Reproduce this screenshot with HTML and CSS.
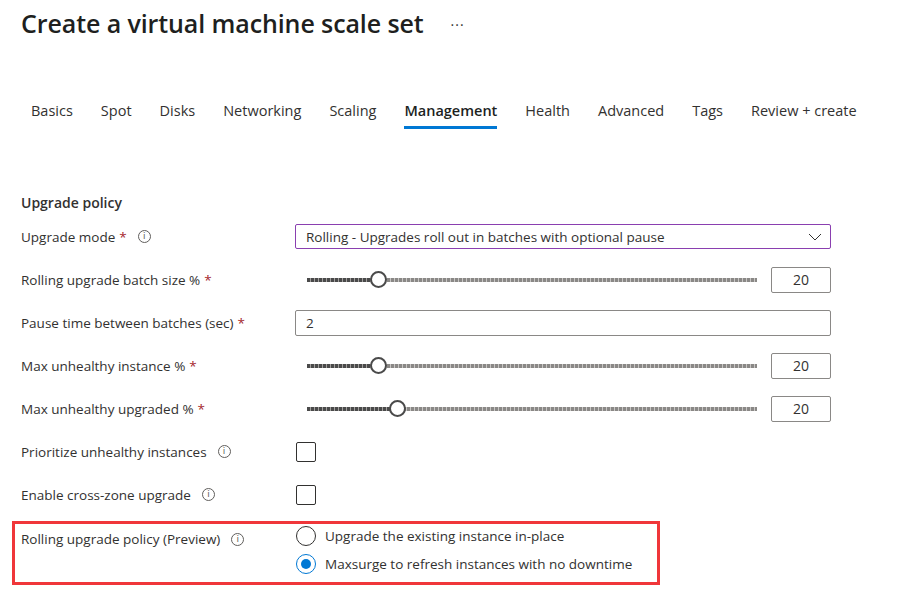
FILE: index.html
```html
<!DOCTYPE html>
<html lang="en">
<head>
<meta charset="utf-8">
<title>Create a virtual machine scale set</title>
<link rel="stylesheet" href="styles.css">
</head>
<body>
<header class="page-header">
  <h1 class="title">Create a virtual machine scale set</h1>
  <span class="more">···</span>
</header>

<nav class="tabs">
  <span class="tab">Basics</span>
  <span class="tab">Spot</span>
  <span class="tab">Disks</span>
  <span class="tab">Networking</span>
  <span class="tab">Scaling</span>
  <span class="tab active">Management</span>
  <span class="tab">Health</span>
  <span class="tab">Advanced</span>
  <span class="tab">Tags</span>
  <span class="tab">Review + create</span>
</nav>

<main class="form">
  <h2 class="section">Upgrade policy</h2>

  <div class="row">
    <div class="label">Upgrade mode <span class="req">*</span> <span class="info">i</span></div>
    <div class="control">
      <div class="dropdown">
        <span>Rolling - Upgrades roll out in batches with optional pause</span>
        <svg class="chev" width="14" height="8" viewBox="0 0 14 8"><path d="M1 1l6 6 6-6" fill="none" stroke="#323130" stroke-width="1"/></svg>
      </div>
    </div>
  </div>

  <div class="row">
    <div class="label">Rolling upgrade batch size % <span class="req">*</span></div>
    <div class="control slider-control">
      <div class="slider"><div class="fill" style="width:15.8%"></div><div class="thumb" style="left:15.8%"></div></div>
      <div class="num">20</div>
    </div>
  </div>

  <div class="row">
    <div class="label">Pause time between batches (sec) <span class="req">*</span></div>
    <div class="control">
      <div class="textbox">2</div>
    </div>
  </div>

  <div class="row">
    <div class="label">Max unhealthy instance % <span class="req">*</span></div>
    <div class="control slider-control">
      <div class="slider"><div class="fill" style="width:15.8%"></div><div class="thumb" style="left:15.8%"></div></div>
      <div class="num">20</div>
    </div>
  </div>

  <div class="row">
    <div class="label">Max unhealthy upgraded % <span class="req">*</span></div>
    <div class="control slider-control">
      <div class="slider"><div class="fill" style="width:20%"></div><div class="thumb" style="left:20%"></div></div>
      <div class="num">20</div>
    </div>
  </div>

  <div class="row">
    <div class="label">Prioritize unhealthy instances <span class="info">i</span></div>
    <div class="control"><span class="checkbox"></span></div>
  </div>

  <div class="row">
    <div class="label">Enable cross-zone upgrade <span class="info">i</span></div>
    <div class="control"><span class="checkbox"></span></div>
  </div>

  <div class="highlight">
    <div class="label top">Rolling upgrade policy (Preview) <span class="info">i</span></div>
    <div class="radios">
      <div class="radio-item"><span class="radio"></span>Upgrade the existing instance in-place</div>
      <div class="radio-item"><span class="radio checked"></span>Maxsurge to refresh instances with no downtime</div>
    </div>
  </div>
</main>
</body>
</html>
```

FILE: styles.css
```css
* { box-sizing: border-box; }
html, body { margin: 0; padding: 0; background: #fff; }
body {
  font-family: "Open Sans", "Noto Sans", sans-serif;
  font-size: 13.5px;
  color: #323130;
  width: 908px;
  height: 594px;
  overflow: hidden;
}
.page-header {
  display: flex;
  align-items: center;
  padding: 6px 0 0 21px;
  height: 40px;
}
.title {
  margin: 0;
  font-size: 25px;
  font-weight: 600;
  letter-spacing: -0.1px;
  color: #201f1e;
}
.more {
  margin-left: 27px;
  font-size: 14px;
  color: #323130;
  letter-spacing: 1px;
  position: relative;
  top: 1px;
}
.tabs {
  display: flex;
  gap: 28px;
  padding: 0 0 0 31px;
  margin-top: 61px;
  height: 30px;
}
.tab {
  font-size: 14.5px;
  line-height: 20px;
  position: relative;
  white-space: nowrap;
}
.tab.active { font-weight: 600; color: #201f1e; }
.tab.active::after {
  content: "";
  position: absolute;
  left: 0; right: 0;
  top: 25px;
  height: 3px;
  background: #0078d4;
}
.form {
  padding: 62px 0 0 21px;
}
.section {
  margin: 0;
  font-size: 14px;
  font-weight: 600;
  line-height: 20px;
  height: 22px;
  color: #323130;
}
.row {
  display: grid;
  grid-template-columns: 274px 536px;
  height: 43px;
  align-items: center;
}
.label {
  display: flex;
  align-items: center;
  white-space: nowrap;
}
.req { color: #a4262c; margin-left: 4px; }
.info {
  display: inline-flex;
  align-items: center;
  justify-content: center;
  width: 13px;
  height: 13px;
  border: 1px solid #605e5c;
  border-radius: 50%;
  font-size: 9px;
  line-height: 1;
  color: #605e5c;
  margin-left: 11px;
  font-family: "DejaVu Sans", sans-serif;
}
.dropdown {
  height: 25px;
  border: 1px solid #8a3fb0;
  border-radius: 2px;
  display: flex;
  align-items: center;
  justify-content: space-between;
  padding: 0 8px 0 10px;
  font-size: 13.5px;
}
.slider-control {
  display: flex;
  align-items: center;
}
.slider {
  position: relative;
  margin-left: 12px;
  width: 450px;
  height: 4px;
  background: repeating-linear-gradient(90deg, #8a8886 0 3px, #c8c6c4 3px 4px);
}
.fill {
  position: absolute;
  left: 0; top: 0; bottom: 0;
  background: repeating-linear-gradient(90deg, #4a4a4a 0 3px, #a19f9d 3px 4px);
}
.thumb {
  position: absolute;
  top: 50%;
  width: 17px;
  height: 17px;
  margin: -8.5px 0 0 -8.5px;
  border: 2px solid #4a4a4a;
  border-radius: 50%;
  background: #fff;
}
.num {
  margin-left: 14px;
  width: 60px;
  height: 26px;
  border: 1px solid #8a8886;
  border-radius: 2px;
  display: flex;
  align-items: center;
  justify-content: center;
  font-size: 14px;
}
.textbox {
  height: 26px;
  border: 1px solid #8a8886;
  border-radius: 2px;
  padding: 0 10px;
  display: flex;
  align-items: center;
  font-size: 13.5px;
}
.checkbox {
  display: block;
  width: 20px;
  height: 20px;
  border: 1px solid #323130;
  border-radius: 2px;
  margin-left: 1px;
}
.highlight {
  margin: 5px 0 0 -9px;
  width: 648px;
  height: 64px;
  border: 3px solid #f0363a;
  display: grid;
  grid-template-columns: 274px 1fr;
  padding: 2px 0 0 6px;
}
.label.top { height: 26px; align-self: start; margin-top: 0; }
.radios {
  display: flex;
  flex-direction: column;
  gap: 8px;
}
.radio-item {
  display: flex;
  align-items: center;
  height: 20px;
  white-space: nowrap;
}
.radio {
  width: 20px;
  height: 20px;
  border: 1px solid #323130;
  border-radius: 50%;
  margin: 0 9px 0 1px;
  position: relative;
  flex: none;
}
.radio.checked { border-color: #0078d4; }
.radio.checked::after {
  content: "";
  position: absolute;
  left: 4px; top: 4px;
  width: 10px; height: 10px;
  border-radius: 50%;
  background: #0078d4;
}
```
